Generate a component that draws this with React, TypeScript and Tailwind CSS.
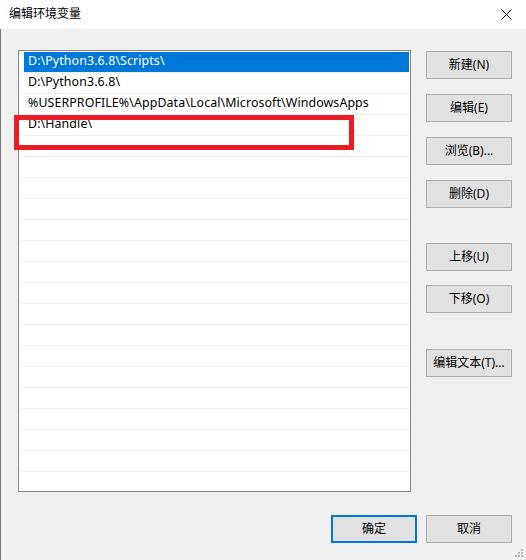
import React from "react";

const rows = [
  "D:\\Python3.6.8\\Scripts\\",
  "D:\\Python3.6.8\\",
  "%USERPROFILE%\\AppData\\Local\\Microsoft\\WindowsApps",
  "D:\\Handle\\",
];

const font = { fontFamily: '"Noto Sans", "Noto Sans CJK SC", sans-serif' };

function Btn({ label, className = "" }: { label: string; className?: string }) {
  return (
    <div
      className={`w-[86px] h-[28px] flex items-center justify-center bg-[#e1e1e1] border border-[#adadad] text-[12px] text-black ${className}`}
    >
      {label}
    </div>
  );
}

export default function App() {
  const total = 21;
  return (
    <div
      className="relative w-[526px] h-[560px] bg-[#f0f0f0] flex flex-col overflow-hidden"
      style={font}
    >
      <div className="h-[29px] bg-white flex items-center justify-between pl-[9px] pr-[13px]">
        <span className="text-[12px] text-black">编辑环境变量</span>
        <svg width="11" height="11" viewBox="0 0 11 11" className="mr-[1px]">
          <path d="M0.5 0.5 L10.5 10.5 M10.5 0.5 L0.5 10.5" stroke="#000" strokeWidth="1" />
        </svg>
      </div>
      <div className="flex-1 flex border-l border-[#7a7a7a] pl-[17px] pt-[21px]">
        <div className="w-[393px] h-[442px] bg-white border border-[#828790] pt-[1px] overflow-hidden">
          {Array.from({ length: total }).map((_, i) => {
            const text = rows[i] ?? "";
            const sel = i === 0;
            return (
              <div key={i} className="h-[21px] flex flex-col">
                <div
                  className={`h-[20px] flex items-center text-[12.4px] tracking-[0.1px] ${
                    sel ? "bg-[#0078d7] text-white ml-[5px] mr-[1px] pl-[4px]" : "text-black ml-[2px] mr-[1px] pl-[7px]"
                  }`}
                >
                  {text}
                </div>
                <div className="h-[1px] bg-[#f0f0f0] ml-[2px] mr-[1px]" />
              </div>
            );
          })}
        </div>
        <div className="ml-[15px] flex flex-col pt-[1px]">
          <Btn label="新建(N)" />
          <Btn label="编辑(E)" className="mt-[15px]" />
          <Btn label="浏览(B)..." className="mt-[15px]" />
          <Btn label="删除(D)" className="mt-[15px]" />
          <Btn label="上移(U)" className="mt-[35px]" />
          <Btn label="下移(O)" className="mt-[14px]" />
          <Btn label="编辑文本(T)..." className="mt-[36px]" />
        </div>
      </div>
      <div className="h-[69px] flex justify-end items-start border-l border-[#7a7a7a] pr-[14px] pt-[23px] gap-[9px]">
        <div className="w-[86px] h-[28px] flex items-center justify-center bg-[#e1e1e1] border-2 border-[#0078d7] text-[12px] text-black">
          确定
        </div>
        <Btn label="取消" />
      </div>
      <svg width="8" height="8" viewBox="0 0 8 8" className="absolute right-[3px] bottom-[3px]">
        <rect x="6" y="0" width="2" height="2" fill="#b8b8b8" />
        <rect x="3" y="3" width="2" height="2" fill="#b8b8b8" />
        <rect x="6" y="3" width="2" height="2" fill="#b8b8b8" />
        <rect x="0" y="6" width="2" height="2" fill="#b8b8b8" />
        <rect x="3" y="6" width="2" height="2" fill="#b8b8b8" />
        <rect x="6" y="6" width="2" height="2" fill="#b8b8b8" />
      </svg>
      <div className="absolute left-[14px] top-[115px] w-[340px] h-[35px] border-[5px] border-[#ed1c24]" />
    </div>
  );
}
